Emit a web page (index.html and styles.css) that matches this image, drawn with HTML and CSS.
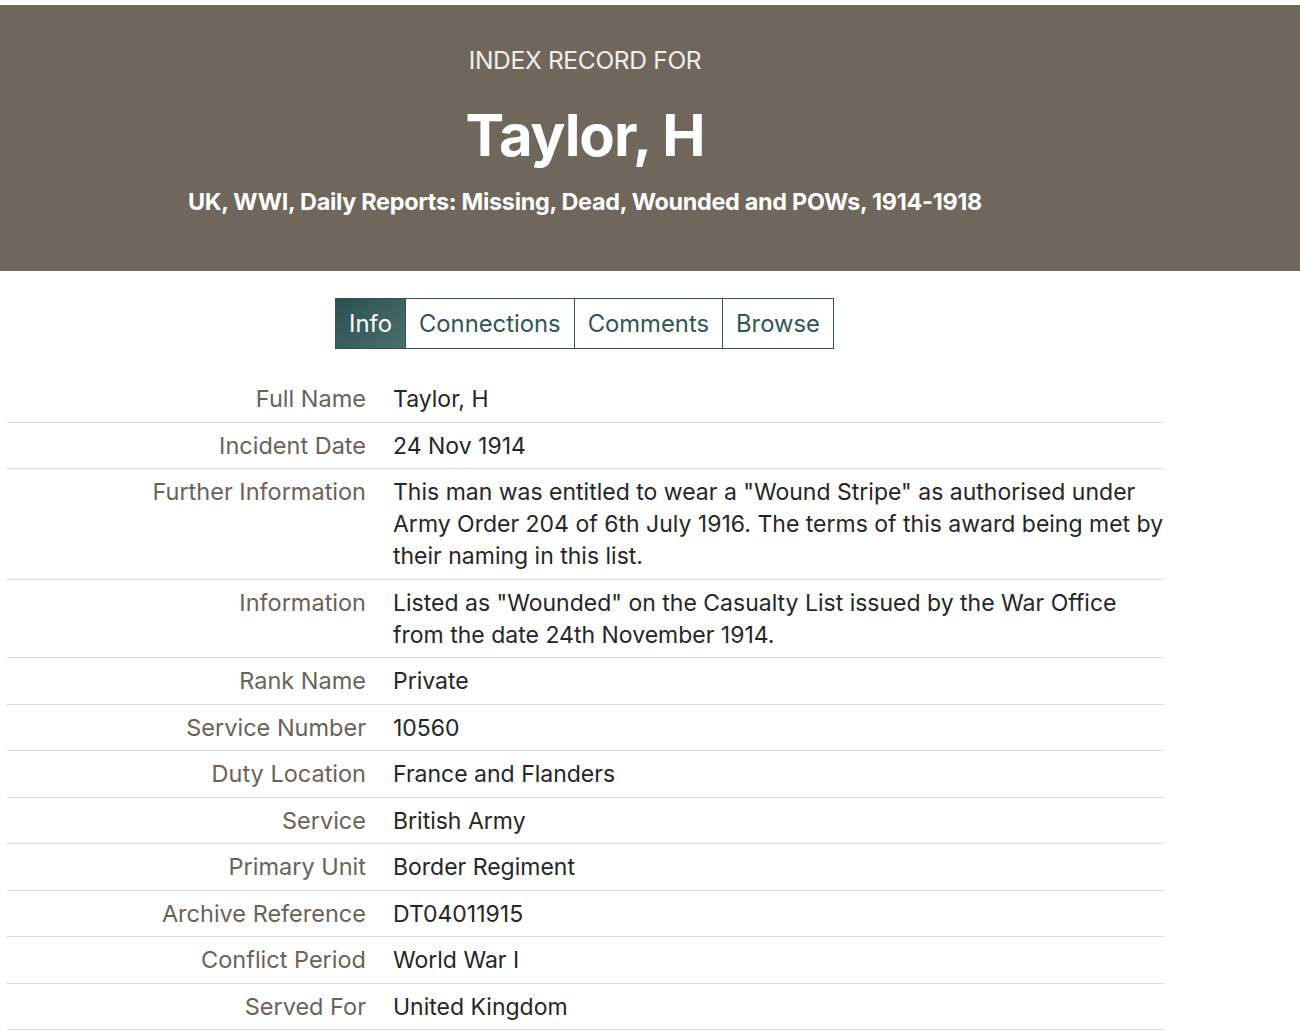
FILE: index.html
```
<!DOCTYPE html>
<html lang="en">
<head>
    <meta charset="UTF-8">
    <meta name="viewport" content="width=device-width, initial-scale=1.0">
    <title>Taylor, H - Index Record</title>
    <link rel="stylesheet" href="styles.css">
</head>
<body>

    <header class="record-header">
        <div class="wrap">
            <p class="kicker">INDEX RECORD FOR</p>
            <h1>Taylor, H</h1>
            <h2>UK, WWI, Daily Reports: Missing, Dead, Wounded and POWs, 1914-1918</h2>
        </div>
    </header>

    <div class="wrap">
        <nav class="tabs">
            <a href="#" class="tab active">Info</a>
            <a href="#" class="tab">Connections</a>
            <a href="#" class="tab">Comments</a>
            <a href="#" class="tab">Browse</a>
        </nav>

        <table class="record">
            <tr><th>Full Name</th><td>Taylor, H</td></tr>
            <tr><th>Incident Date</th><td>24 Nov 1914</td></tr>
            <tr><th>Further Information</th><td>This man was entitled to wear a "Wound Stripe" as authorised under Army Order 204 of 6th July 1916. The terms of this award being met by their naming in this list.</td></tr>
            <tr><th>Information</th><td>Listed as "Wounded" on the Casualty List issued by the War Office from the date 24th November 1914.</td></tr>
            <tr><th>Rank Name</th><td>Private</td></tr>
            <tr><th>Service Number</th><td>10560</td></tr>
            <tr><th>Duty Location</th><td>France and Flanders</td></tr>
            <tr><th>Service</th><td>British Army</td></tr>
            <tr><th>Primary Unit</th><td>Border Regiment</td></tr>
            <tr><th>Archive Reference</th><td>DT04011915</td></tr>
            <tr><th>Conflict Period</th><td>World War I</td></tr>
            <tr><th>Served For</th><td>United Kingdom</td></tr>
        </table>
    </div>

</body>
</html>
```

FILE: styles.css
```
:root {
    --header-bg: #6f675c;
    --teal: #2f5654;
    --label: #6a6257;
    --text: #262626;
    --rule: #dcdcdc;
}

body {
    font-family: Inter, "Liberation Sans", Arial, sans-serif;
    color: var(--text);
    margin: 0;
    padding-top: 5px;
    background: #fff;
}

.wrap {
    width: 1170px;
}

.record-header {
    background-color: var(--header-bg);
    color: #fff;
    text-align: center;
    height: 266px;
}

.record-header .wrap {
    padding-top: 39px;
}

.kicker {
    margin: 0;
    font-size: 24.5px;
    line-height: 32px;
    color: #f2efea;
    letter-spacing: -0.3px;
}

.record-header h1 {
    margin: 23px 0 0;
    font-size: 58px;
    line-height: 72px;
    font-weight: 700;
    letter-spacing: -1px;
}

.record-header h2 {
    margin: 15px 0 0;
    font-size: 23.4px;
    line-height: 32px;
    font-weight: 700;
    letter-spacing: -0.3px;
}

.tabs {
    display: flex;
    justify-content: center;
    margin-top: 27px;
}

.tab {
    display: block;
    padding: 0 13px;
    height: 49px;
    line-height: 49px;
    border: 1px solid var(--teal);
    margin-left: -1px;
    color: var(--teal);
    text-decoration: none;
    font-size: 23.8px;
}

.tab.active {
    background: linear-gradient(135deg, #2c504e 0%, #4b6f6d 100%);
    color: #fff;
}

.record {
    margin: 27px 0 0 7px;
    width: 1157px;
    border-collapse: collapse;
    font-size: 23px;
    line-height: 32px;
}

.record tr {
    border-bottom: 1px solid var(--rule);
}

.record th {
    width: 359px;
    padding: 7px 14px 6.5px 0;
    text-align: right;
    vertical-align: top;
    font-weight: normal;
    color: var(--label);
    white-space: nowrap;
    font-size: 23.5px;
}

.record td {
    padding: 7px 0 6.5px 13px;
    vertical-align: top;
    color: var(--text);
}
```
